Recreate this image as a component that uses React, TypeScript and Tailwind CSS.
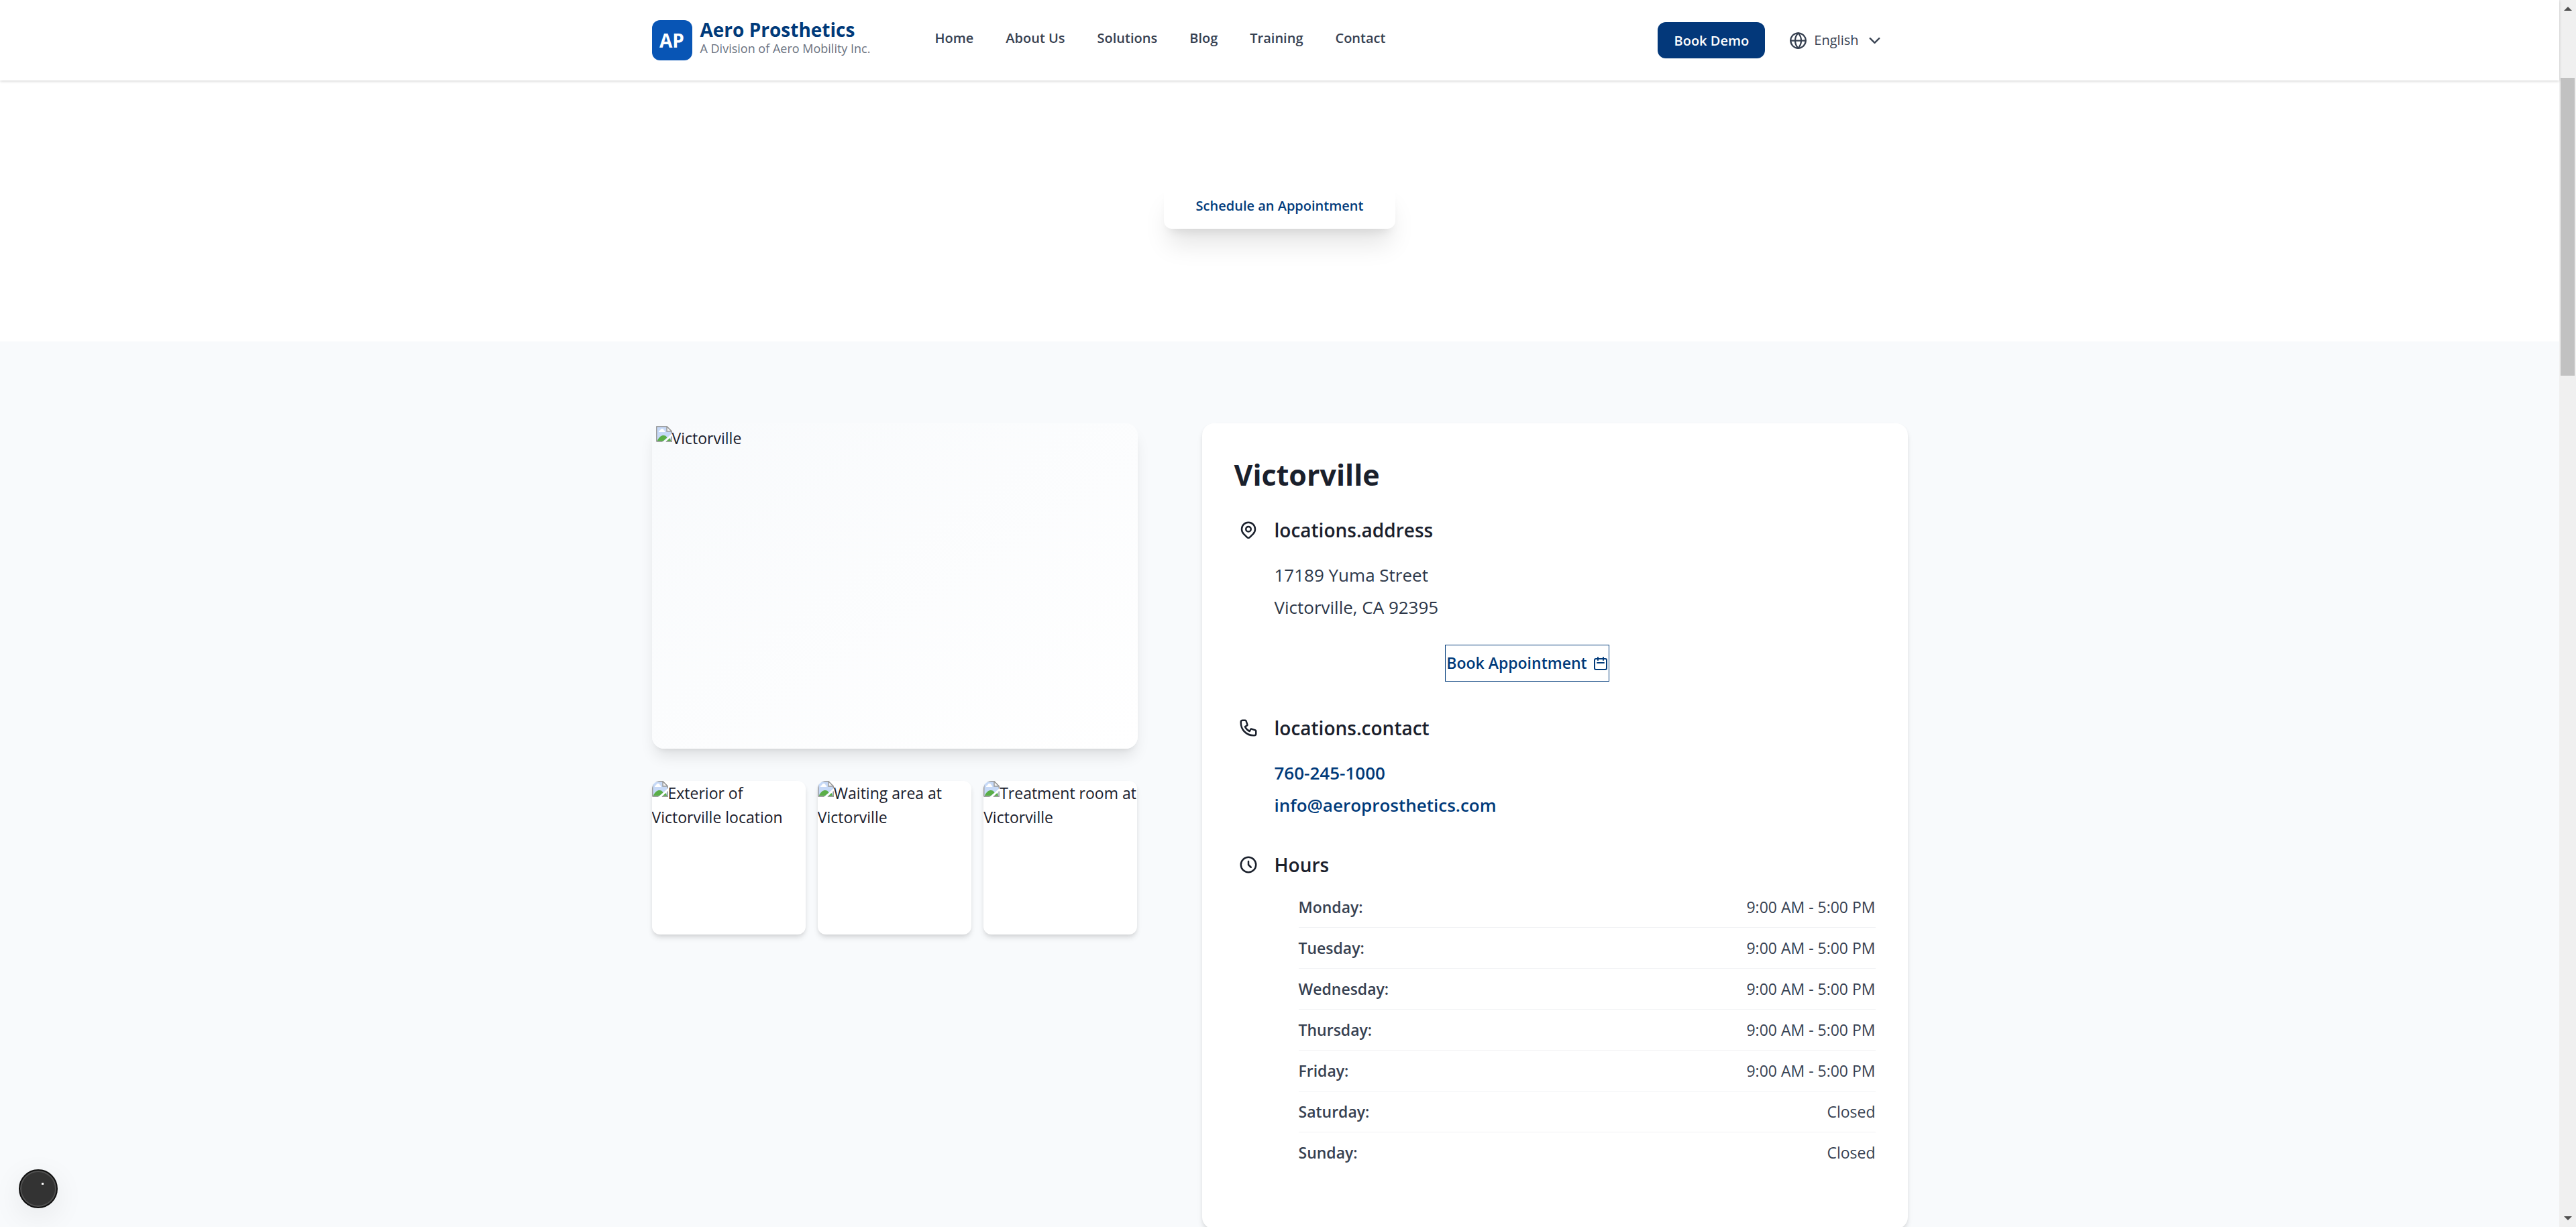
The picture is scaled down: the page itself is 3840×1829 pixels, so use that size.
import React from 'react';
import { ChevronDown, Globe } from 'lucide-react';
import {
  HiOutlineCalendar,
  HiOutlineClock,
  HiOutlineLocationMarker,
  HiOutlinePhone,
} from 'react-icons/hi';

const navItems = ['Home', 'About Us', 'Solutions', 'Blog', 'Training', 'Contact'];

const photos = [
  'Exterior of Victorville location',
  'Waiting area at Victorville',
  'Treatment room at Victorville',
];

const hours = [
  ['Monday', '9:00 AM - 5:00 PM'],
  ['Tuesday', '9:00 AM - 5:00 PM'],
  ['Wednesday', '9:00 AM - 5:00 PM'],
  ['Thursday', '9:00 AM - 5:00 PM'],
  ['Friday', '9:00 AM - 5:00 PM'],
  ['Saturday', 'Closed'],
  ['Sunday', 'Closed'],
];

function BrokenImageIcon() {
  return (
    <svg viewBox="0 0 24 24" className="inline-block size-6 align-top" aria-hidden="true">
      <path d="M0.75 0.75H16L23.25 8V11.5L10.5 23.25H0.75Z" fill="#c6d9f7" />
      <path d="M4 9c0-1.7 1-2.4 2-2.4C6.500 4.800 7.600 4 9 4c1.600 0 2.500 1 2.700 2.400C13 6.500 13.500 7.800 13.300 9Z" fill="#fff" />
      <path d="M1.500 22.500C4 16.500 8 14 11 14c2.500 0 4.300 1 5.500 3.500L10.500 22.500Z" fill="#5aae47" />
      <path d="M0.750 23.250V0.750H16L23.250 8V11.200M0.750 23.250H9.500" fill="none" stroke="#9c9c9c" strokeWidth="1.500" />
      <path d="M16 0.750V8H23.250Z" fill="#f7f7f7" stroke="#9c9c9c" strokeWidth="1.500" />
      <path d="M15.500 23.250L23.250 16V23.250Z" fill="#c6d9f7" />
      <path d="M15.500 22.500L20.500 18L22.500 22.500Z" fill="#5aae47" />
      <path d="M14.800 23.250H23.250V15.500" fill="none" stroke="#9c9c9c" strokeWidth="1.500" />
    </svg>
  );
}

function BrokenImage({ alt, className }: { alt: string; className: string }) {
  return (
    <div className={className}>
      <BrokenImageIcon />
      {alt}
    </div>
  );
}

function SectionHeading({ icon, children }: { icon: React.ReactNode; children: React.ReactNode }) {
  return (
    <div className="flex items-center gap-6 pl-1.5">
      {icon}
      <h3 className="text-[28px] leading-[42px] font-semibold">{children}</h3>
    </div>
  );
}

function Header() {
  return (
    <header className="relative z-10 bg-white shadow-[0_1px_4px_rgba(0,0,0,0.2)]">
      <div className="mx-auto flex h-[120px] max-w-[1920px] items-center px-6">
        <a href="#home" className="flex items-center gap-3">
          <span className="flex size-[60px] items-center justify-center rounded-xl bg-[#0855b5] text-[28px] font-bold text-white">
            AP
          </span>
          <span className="flex flex-col pb-2">
            <span className="text-[28px] leading-8 font-bold text-[#003a7a]">Aero Prosthetics</span>
            <span className="text-[18px] leading-6 text-[#6b7280]">A Division of Aero Mobility Inc.</span>
          </span>
        </a>
        <nav className="ml-24 flex gap-12 pb-1.5 text-xl font-semibold text-[#374151]">
          {navItems.map((item) => (
            <a key={item} href={'#' + item.toLowerCase().replace(' ', '-')}>
              {item}
            </a>
          ))}
        </nav>
        <div className="ml-auto flex items-center gap-9 pr-9">
          <a
            href="#demo"
            className="flex h-[54px] w-40 items-center justify-center rounded-xl bg-[#03387a] pt-0.5 text-xl font-semibold text-white"
          >
            Book Demo
          </a>
          <label className="flex items-center gap-2.5 text-[#374151]">
            <Globe className="size-[27px]" aria-label="Language" />
            <select className="field-sizing-content appearance-none bg-transparent text-xl text-[#374151]">
              <option>English</option>
            </select>
            <ChevronDown className="size-[27px]" aria-hidden="true" />
          </label>
        </div>
      </div>
    </header>
  );
}

function LocationCard() {
  return (
    <article className="rounded-[18px] bg-white px-12 pt-12 pb-21 shadow-[0_6px_9px_-1px_rgba(0,0,0,0.1),0_3px_6px_-2px_rgba(0,0,0,0.1)]">
      <h2 className="text-[43px] leading-[58px] font-bold">Victorville</h2>

      <section className="mt-8">
        <SectionHeading icon={<HiOutlineLocationMarker className="size-[30px]" />}>
          locations.address
        </SectionHeading>
        <address className="mt-[22px] ml-15 text-[26px] leading-[48px] text-[#2d3748] not-italic">
          17189 Yuma Street
          <br />
          Victorville, CA 92395
        </address>
        <div className="mt-8 ml-15 flex max-w-[754px] justify-center">
          <a
            href="#book"
            className="flex h-[55px] items-center gap-2 border border-[#003a7a] pl-px text-[23px] font-semibold text-[#003a7a]"
          >
            Book Appointment
            <HiOutlineCalendar className="size-6" />
          </a>
        </div>
      </section>

      <section className="mt-12">
        <SectionHeading icon={<HiOutlinePhone className="size-[30px]" />}>locations.contact</SectionHeading>
        <div className="mt-[22px] ml-15 flex flex-col items-start text-[26px] leading-[48px] font-semibold text-[#003a7a]">
          <a href="tel:760-245-1000">760-245-1000</a>
          <a href="mailto:info@aeroprosthetics.com">info@aeroprosthetics.com</a>
        </div>
      </section>

      <section className="mt-11">
        <SectionHeading icon={<HiOutlineClock className="size-[30px]" />}>Hours</SectionHeading>
        <div className="mt-3 pl-24">
          <table className="w-full text-[23px] leading-9 text-[#374151]">
            <tbody>
              {hours.map(([day, time]) => (
                <tr key={day} className="border-b border-[#f1f2f4] last:border-b-0">
                  <th scope="row" className="py-3 text-left font-semibold">
                    {day}:
                  </th>
                  <td className="py-3 text-right">{time}</td>
                </tr>
              ))}
            </tbody>
          </table>
        </div>
      </section>
    </article>
  );
}

function ScrollBar() {
  return (
    <div className="flex w-[25px] shrink-0 flex-col items-center bg-[#f0f0f0] py-2.5" aria-hidden="true">
      <svg viewBox="0 0 12 6" className="h-1.5 w-3" fill="#505050">
        <path d="M6 0L12 6H0Z" />
      </svg>
      <div className="mt-25 h-[444px] w-[21px] bg-[#c1c1c1]" />
      <svg viewBox="0 0 12 6" className="mt-auto h-1.5 w-3" fill="#505050">
        <path d="M0 0H12L6 6Z" />
      </svg>
    </div>
  );
}

export default function App() {
  return (
    <div className="flex h-screen overflow-hidden bg-[#f8fafc] font-['Open_Sans',sans-serif] text-[#1a202c]">
      <div className="min-w-0 flex-1">
        <Header />
        <main>
          <section className="flex justify-center bg-white pt-[153px] pb-[168px]">
            <a
              href="#schedule"
              className="flex h-17 items-center rounded-xl bg-white px-12 text-xl font-semibold text-[#003a7a] shadow-[0_30px_37px_-7px_rgba(0,0,0,0.1),0_12px_15px_-9px_rgba(0,0,0,0.1)]"
            >
              Schedule an Appointment
            </a>
          </section>
          <section className="mx-auto grid max-w-[1920px] grid-cols-12 gap-x-24 px-6 pt-[122px]">
            <div className="col-span-5">
              <BrokenImage
                alt="Victorville"
                className="h-[485px] overflow-hidden rounded-[18px] bg-linear-to-br from-[#f8fafc] to-white pt-1 pl-1.5 text-[23px] leading-9 shadow-[0_15px_22px_-4px_rgba(0,0,0,0.1),0_6px_9px_-6px_rgba(0,0,0,0.1)]"
              />
              <div className="mt-12 grid grid-cols-3 gap-[18px]">
                {photos.map((alt) => (
                  <BrokenImage
                    key={alt}
                    alt={alt}
                    className="aspect-square overflow-hidden rounded-xl bg-white text-[23px] leading-9 shadow-[0_6px_9px_-1px_rgba(0,0,0,0.1),0_3px_6px_-2px_rgba(0,0,0,0.1)]"
                  />
                ))}
              </div>
            </div>
            <div className="col-span-7">
              <LocationCard />
            </div>
          </section>
        </main>
      </div>
      <ScrollBar />
      <button
        type="button"
        aria-label="Open chat"
        className="fixed bottom-7 left-7 flex size-[58px] items-center justify-center rounded-full border-2 border-[#111] bg-[#333] shadow-[inset_0_0_0_2px_#505050,0_12px_45px_rgba(0,0,0,0.08)]"
      >
        <span className="mb-4 ml-3 size-[3px] bg-white" />
      </button>
    </div>
  );
}
